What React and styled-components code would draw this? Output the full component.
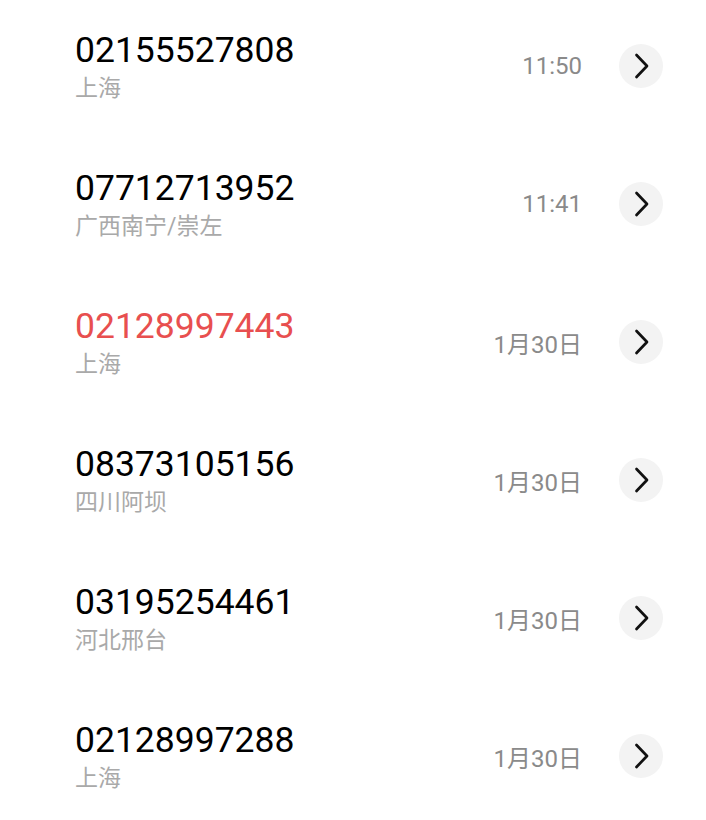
import styled, { createGlobalStyle } from "styled-components";

const GlobalStyle = createGlobalStyle`
  body {
    margin: 0;
    background: #ffffff;
    font-family: Roboto, "Noto Sans CJK SC", sans-serif;
  }
`;

const CallList = styled.ul`
  list-style: none;
  margin: -3px 0 0;
  padding: 0;
`;

const CallRow = styled.li`
  display: flex;
  align-items: center;
  height: 138px;
  padding: 0 43px 0 75px;
`;

const Info = styled.div`
  flex: 1;
  display: flex;
  flex-direction: column;
`;

const Number = styled.div`
  font-size: 35.5px;
  line-height: 44px;
  color: ${(props) => (props.missed ? "#e84f4f" : "#000000")};
`;

const Place = styled.div`
  font-size: 23px;
  line-height: 33px;
  color: #a9a9a9;
`;

const Time = styled.span`
  font-size: 24px;
  color: #8a8a8a;
  margin-right: 37px;
`;

const DetailButton = styled.button`
  width: 44px;
  height: 44px;
  border: none;
  border-radius: 50%;
  background: #f3f3f3;
  padding: 0;
  display: flex;
  align-items: center;
  justify-content: center;
`;

const calls = [
  { number: "02155527808", place: "上海", time: "11:50" },
  { number: "07712713952", place: "广西南宁/崇左", time: "11:41" },
  { number: "02128997443", place: "上海", time: "1月30日", missed: true },
  { number: "08373105156", place: "四川阿坝", time: "1月30日" },
  { number: "03195254461", place: "河北邢台", time: "1月30日" },
  { number: "02128997288", place: "上海", time: "1月30日" },
];

function Chevron() {
  return (
    <svg width="44" height="44" viewBox="0 0 44 44">
      <path
        d="M17.5 11 L28 22 L17.5 33"
        fill="none"
        stroke="#111111"
        strokeWidth="2.7"
        strokeLinecap="round"
        strokeLinejoin="round"
      />
    </svg>
  );
}

export default function App() {
  return (
    <>
      <GlobalStyle />
      <CallList>
        {calls.map((call, index) => (
          <CallRow key={`call-${index}`}>
            <Info>
              <Number missed={call.missed}>{call.number}</Number>
              <Place>{call.place}</Place>
            </Info>
            <Time>{call.time}</Time>
            <DetailButton>
              <Chevron />
            </DetailButton>
          </CallRow>
        ))}
      </CallList>
    </>
  );
}
